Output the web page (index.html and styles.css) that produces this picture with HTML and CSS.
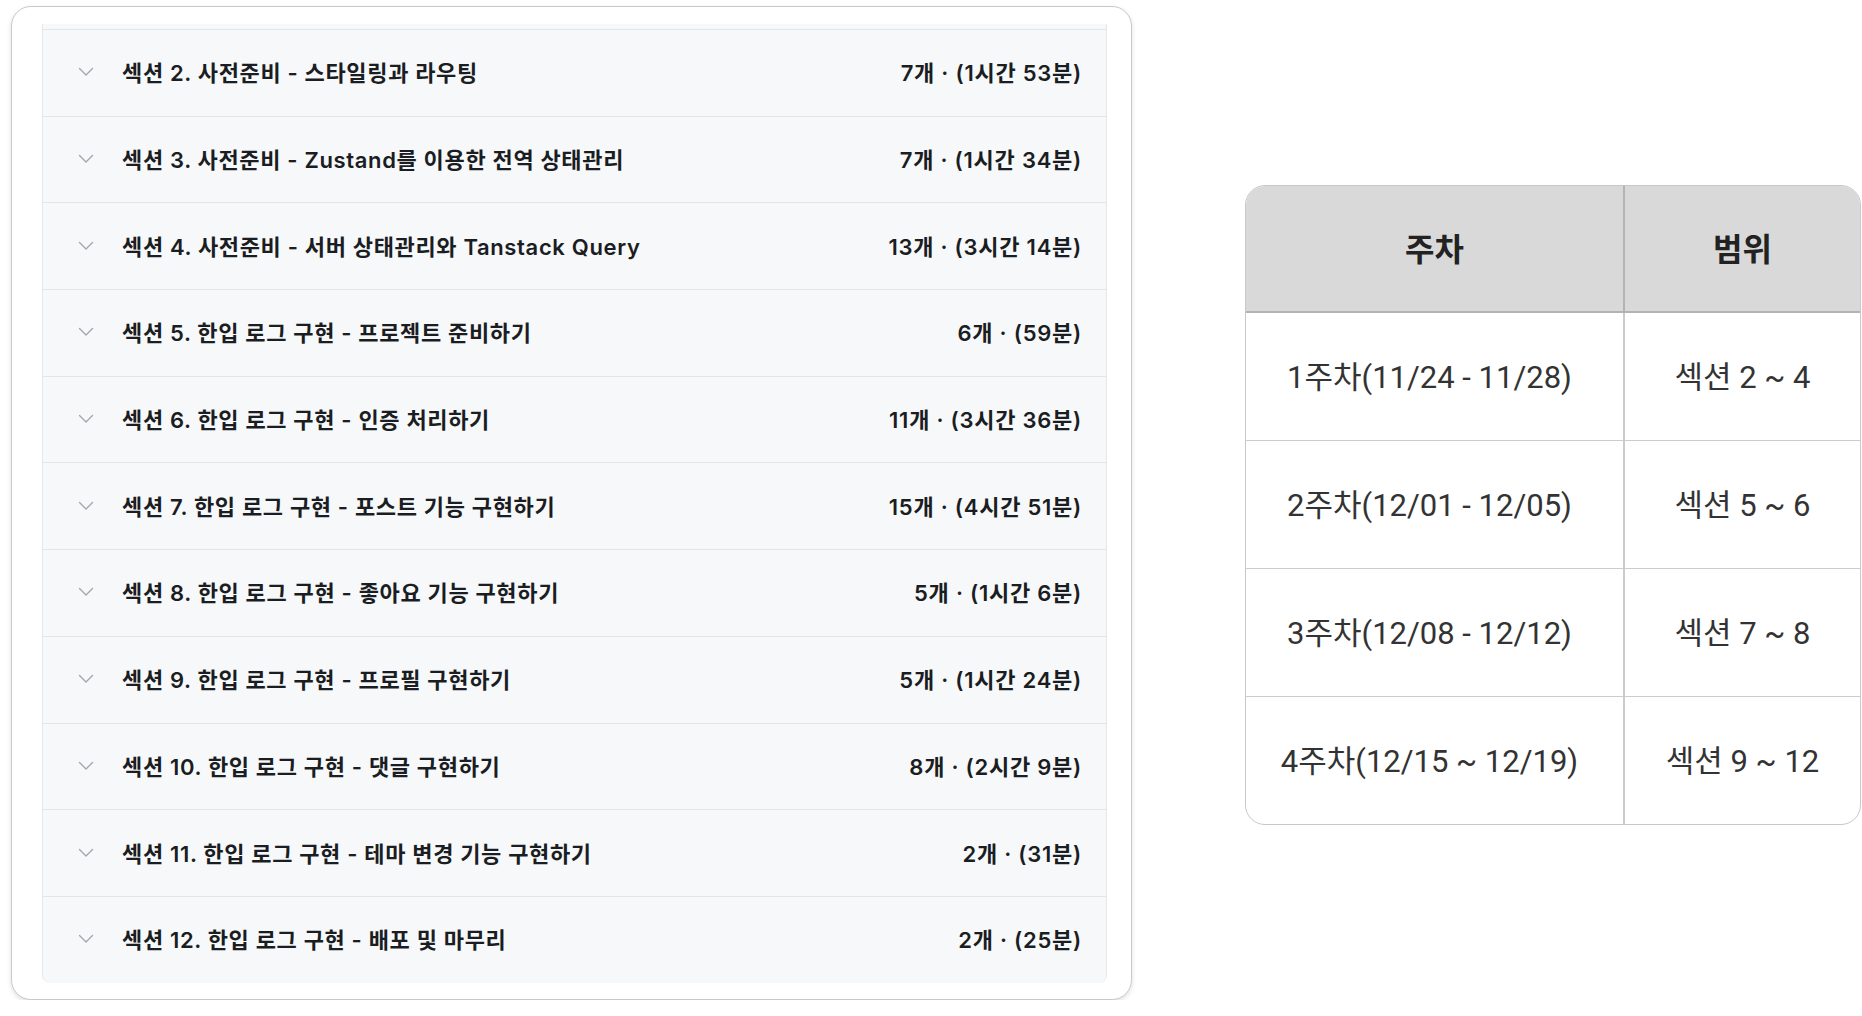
FILE: index.html
```html
<!DOCTYPE html>
<html lang="ko">
<head>
<meta charset="utf-8">
<title>커리큘럼</title>
<link rel="stylesheet" href="styles.css">
</head>
<body>
<div class="page">
  <div class="card">
    <div class="list">
      <div class="row"><span class="left"><svg class="chev" viewBox="0 0 16 10"><path d="M1.5 1.5 L8 8 L14.5 1.5"/></svg><span class="title">섹션 2. 사전준비 - 스타일링과 라우팅</span></span><span class="meta">7개 · (1시간 53분)</span></div>
      <div class="row"><span class="left"><svg class="chev" viewBox="0 0 16 10"><path d="M1.5 1.5 L8 8 L14.5 1.5"/></svg><span class="title">섹션 3. 사전준비 - Zustand를 이용한 전역 상태관리</span></span><span class="meta">7개 · (1시간 34분)</span></div>
      <div class="row"><span class="left"><svg class="chev" viewBox="0 0 16 10"><path d="M1.5 1.5 L8 8 L14.5 1.5"/></svg><span class="title">섹션 4. 사전준비 - 서버 상태관리와 Tanstack Query</span></span><span class="meta">13개 · (3시간 14분)</span></div>
      <div class="row"><span class="left"><svg class="chev" viewBox="0 0 16 10"><path d="M1.5 1.5 L8 8 L14.5 1.5"/></svg><span class="title">섹션 5. 한입 로그 구현 - 프로젝트 준비하기</span></span><span class="meta">6개 · (59분)</span></div>
      <div class="row"><span class="left"><svg class="chev" viewBox="0 0 16 10"><path d="M1.5 1.5 L8 8 L14.5 1.5"/></svg><span class="title">섹션 6. 한입 로그 구현 - 인증 처리하기</span></span><span class="meta">11개 · (3시간 36분)</span></div>
      <div class="row"><span class="left"><svg class="chev" viewBox="0 0 16 10"><path d="M1.5 1.5 L8 8 L14.5 1.5"/></svg><span class="title">섹션 7. 한입 로그 구현 - 포스트 기능 구현하기</span></span><span class="meta">15개 · (4시간 51분)</span></div>
      <div class="row"><span class="left"><svg class="chev" viewBox="0 0 16 10"><path d="M1.5 1.5 L8 8 L14.5 1.5"/></svg><span class="title">섹션 8. 한입 로그 구현 - 좋아요 기능 구현하기</span></span><span class="meta">5개 · (1시간 6분)</span></div>
      <div class="row"><span class="left"><svg class="chev" viewBox="0 0 16 10"><path d="M1.5 1.5 L8 8 L14.5 1.5"/></svg><span class="title">섹션 9. 한입 로그 구현 - 프로필 구현하기</span></span><span class="meta">5개 · (1시간 24분)</span></div>
      <div class="row"><span class="left"><svg class="chev" viewBox="0 0 16 10"><path d="M1.5 1.5 L8 8 L14.5 1.5"/></svg><span class="title">섹션 10. 한입 로그 구현 - 댓글 구현하기</span></span><span class="meta">8개 · (2시간 9분)</span></div>
      <div class="row"><span class="left"><svg class="chev" viewBox="0 0 16 10"><path d="M1.5 1.5 L8 8 L14.5 1.5"/></svg><span class="title">섹션 11. 한입 로그 구현 - 테마 변경 기능 구현하기</span></span><span class="meta">2개 · (31분)</span></div>
      <div class="row"><span class="left"><svg class="chev" viewBox="0 0 16 10"><path d="M1.5 1.5 L8 8 L14.5 1.5"/></svg><span class="title">섹션 12. 한입 로그 구현 - 배포 및 마무리</span></span><span class="meta">2개 · (25분)</span></div>
    </div>
  </div>

  <table class="plan">
    <thead>
      <tr><th class="c1">주차</th><th class="c2">범위</th></tr>
    </thead>
    <tbody>
      <tr><td>1주차(11/24 - 11/28)</td><td>섹션 2 ~ 4</td></tr>
      <tr><td>2주차(12/01 - 12/05)</td><td>섹션 5 ~ 6</td></tr>
      <tr><td>3주차(12/08 - 12/12)</td><td>섹션 7 ~ 8</td></tr>
      <tr><td>4주차(12/15 ~ 12/19)</td><td>섹션 9 ~ 12</td></tr>
    </tbody>
  </table>
</div>
</body>
</html>
```

FILE: styles.css
```css
html, body {
  margin: 0;
  padding: 0;
  background: #ffffff;
}

.page {
  display: flex;
  align-items: flex-start;
  gap: 113px;
  padding: 6px 0 0 11px;
}

.card {
  box-sizing: border-box;
  width: 1121px;
  height: 994px;
  background: #ffffff;
  border: 1px solid #c9c9c9;
  border-radius: 20px;
  box-shadow: 0 2px 5px rgba(0, 0, 0, 0.12);
  padding: 17px 24px 16px 30px;
}

.list {
  background: #f7f8fa;
  border-left: 1px solid #e6e8eb;
  border-right: 1px solid #e6e8eb;
  border-radius: 0 0 8px 8px;
  padding-top: 5px;
  overflow: hidden;
}

.row {
  box-sizing: border-box;
  display: flex;
  align-items: center;
  justify-content: space-between;
  height: 86.7px;
  border-top: 1px solid #e2e4e8;
  padding: 0 24px 3px 35px;
  font-family: Inter, "Noto Sans CJK KR", sans-serif;
  font-size: 22px;
  font-weight: 600;
  color: #1a1d22;
}

.left {
  display: flex;
  align-items: center;
}

.title {
  letter-spacing: 0.65px;
}

.chev {
  width: 16px;
  height: 10px;
  margin-right: 28px;
  margin-top: 2px;
  fill: none;
  stroke: #a3a7ad;
  stroke-width: 1.4;
  stroke-linecap: round;
  stroke-linejoin: round;
}

.meta {
  white-space: nowrap;
  letter-spacing: 0.75px;
}

.plan {
  margin-top: 179px;
  width: 616px;
  border-collapse: separate;
  border-spacing: 0;
  border: 1px solid #c8c8c8;
  border-radius: 20px;
  overflow: hidden;
  font-family: Roboto, "Noto Sans CJK KR", sans-serif;
  font-size: 31px;
  color: #333333;
}

.plan th {
  height: 121px;
  background: #d9d9d9;
  font-size: 32px;
  font-weight: 700;
  color: #222222;
  border-bottom: 2px solid #b3b3b3;
  padding: 0 0 4px;
}

.plan th.c1 {
  width: 377px;
  border-right: 2px solid #b3b3b3;
}

.plan td {
  height: 123px;
  padding: 0 0 4px;
  text-align: center;
  font-weight: 400;
  border-top: 1px solid #cccccc;
}

.plan td:first-child {
  padding-right: 10px;
  border-right: 2px solid #cccccc;
}

.plan tbody tr:first-child td {
  border-top: none;
}
```
